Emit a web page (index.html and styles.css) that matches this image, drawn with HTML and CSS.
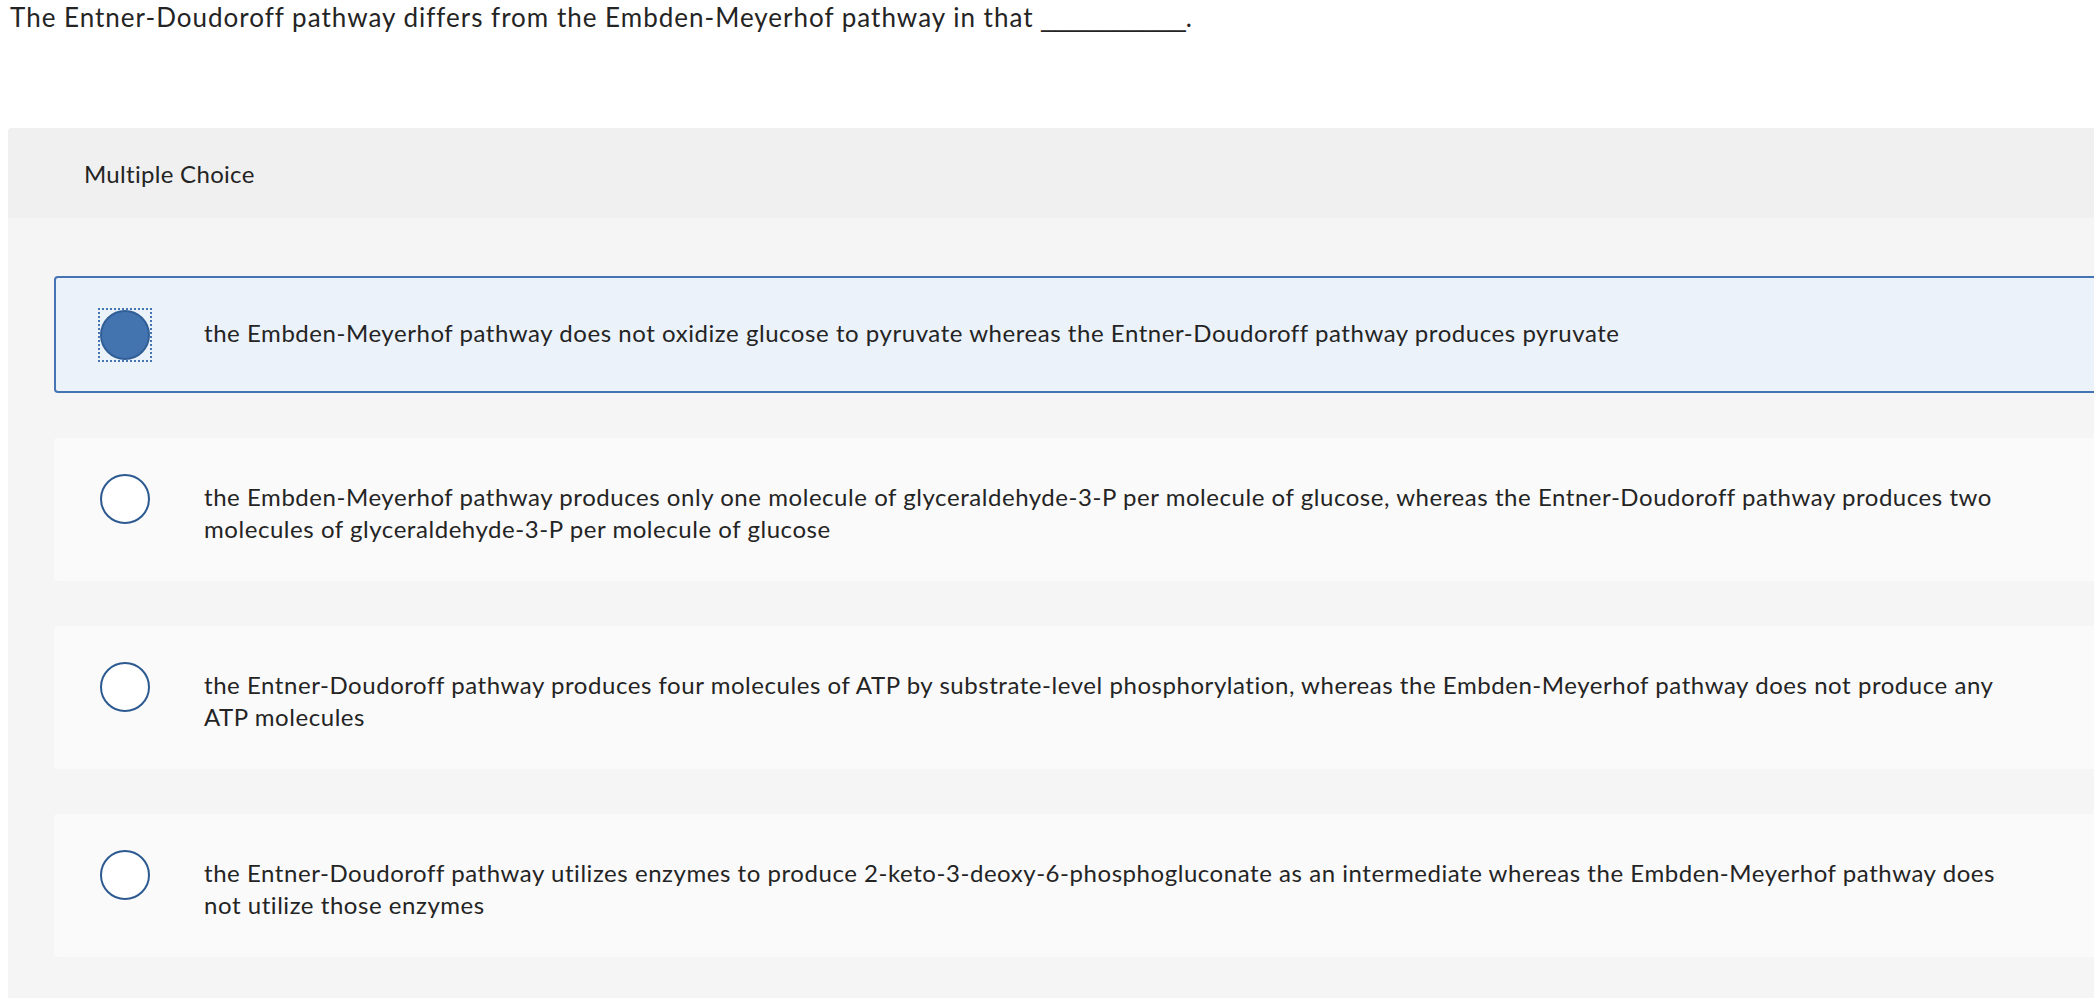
FILE: index.html
```html
<!DOCTYPE html>
<html lang="en">
<head>
<meta charset="utf-8">
<title>Multiple Choice</title>
<link rel="stylesheet" href="styles.css">
</head>
<body>
<div class="question">The Entner-Doudoroff pathway differs from the Embden-Meyerhof pathway in that <span class="blank">__________</span>.</div>
<section class="panel">
  <header class="panel-head">Multiple Choice</header>
  <div class="panel-body">
    <div class="option selected">
      <span class="focus"><span class="radio checked"></span></span>
      <div class="opt-text">the Embden-Meyerhof pathway does not oxidize glucose to pyruvate whereas the Entner-Doudoroff pathway produces pyruvate</div>
    </div>
    <div class="option">
      <span class="focus"><span class="radio"></span></span>
      <div class="opt-text">the Embden-Meyerhof pathway produces only one molecule of glyceraldehyde-3-P per molecule of glucose, whereas the Entner-Doudoroff pathway produces two molecules of glyceraldehyde-3-P per molecule of glucose</div>
    </div>
    <div class="option">
      <span class="focus"><span class="radio"></span></span>
      <div class="opt-text">the Entner-Doudoroff pathway produces four molecules of ATP by substrate-level phosphorylation, whereas the Embden-Meyerhof pathway does not produce any ATP molecules</div>
    </div>
    <div class="option">
      <span class="focus"><span class="radio"></span></span>
      <div class="opt-text">the Entner-Doudoroff pathway utilizes enzymes to produce 2-keto-3-deoxy-6-phosphogluconate as an intermediate whereas the Embden-Meyerhof pathway does not utilize those enzymes</div>
    </div>
  </div>
</section>
</body>
</html>
```
FILE: styles.css
```css
html, body {
  margin: 0;
  padding: 0;
  overflow: hidden;
  background: #ffffff;
}
body {
  font-family: Lato, "Open Sans", sans-serif;
  color: #242424;
}
.question {
  font-size: 26px;
  line-height: 34px;
  letter-spacing: 1px;
  padding: 0 0 0 10px;
  white-space: nowrap;
}
.blank {
  font-family: "Liberation Sans", Arial, sans-serif;
  letter-spacing: 0;
}
.panel {
  margin: 93px 0 0 8px;
  width: 2300px;
  background: #f5f5f5;
  border-radius: 4px 0 0 0;
  padding-bottom: 60px;
}
.panel-head {
  height: 90px;
  display: flex;
  align-items: center;
  padding-left: 76px;
  background: #f0f0f0;
  border-radius: 4px 0 0 0;
  font-size: 24px;
  letter-spacing: 0.3px;
}
.panel-body {
  padding: 58px 0 0 46px;
  display: flex;
  flex-direction: column;
  gap: 45px;
}
.option {
  display: flex;
  align-items: flex-start;
  background: #fafafa;
  border-radius: 4px;
  padding: 36px 0 36px 46px;
}
.option.selected {
  background: #ebf2fa;
  border: 2px solid #4474b1;
  padding: 32px 0 31px 44px;
}
.focus {
  flex: none;
  display: block;
  width: 50px;
  height: 50px;
}
.selected .focus {
  outline: 2px dotted #4474b1;
}
.radio {
  display: block;
  width: 50px;
  height: 50px;
  box-sizing: border-box;
  border-radius: 50%;
  border: 2px solid #2c5a90;
  background: #ffffff;
}
.radio.checked {
  background: #4474b0;
  border-color: #305e96;
}
.opt-text {
  margin: 7px 0 0 54px;
  width: 1805px;
  font-size: 24px;
  line-height: 32px;
  letter-spacing: 0.55px;
}
```
